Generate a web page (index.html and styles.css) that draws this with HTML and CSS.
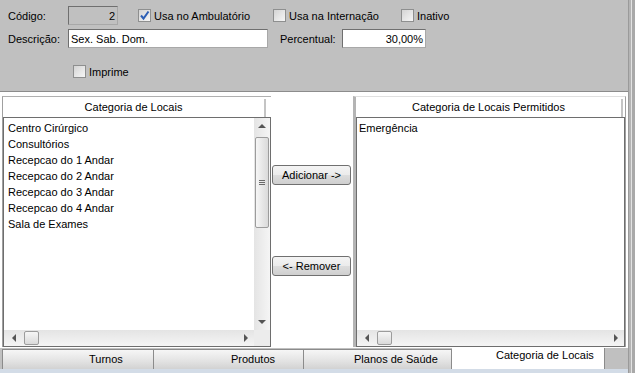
FILE: index.html
```html
<!DOCTYPE html>
<html lang="pt">
<head>
    <meta charset="UTF-8">
    <meta name="viewport" content="width=device-width, initial-scale=1.0">
    <title>Categoria de Locais</title>
    <link rel="stylesheet" href="styles.css">
</head>
<body>

<div class="window">
    <div class="content">

        <!-- dados do registro -->
        <div class="form">
            <div class="row row-code">
                <span class="lbl">Código:</span>
                <div class="field field-code">2</div>
                <div class="check check-amb">
                    <span class="box">
                        <svg width="11" height="11" viewBox="0 0 11 11"><path d="M2 5.5 L4.5 8.5 L9.5 1.5" fill="none" stroke="#2d5fb5" stroke-width="2"/></svg>
                    </span>
                    Usa no Ambulatório
                </div>
                <div class="check check-int"><span class="box"></span>Usa na Internação</div>
                <div class="check"><span class="box"></span>Inativo</div>
            </div>
            <div class="row row-desc">
                <span class="lbl">Descrição:</span>
                <div class="field field-desc">Sex. Sab. Dom.</div>
                <span class="lbl lbl-perc">Percentual:</span>
                <div class="field field-perc">30,00%</div>
            </div>
            <div class="row row-print">
                <div class="check"><span class="box"></span>Imprime</div>
            </div>
        </div>

        <!-- listas de categorias -->
        <div class="lists">
            <div class="panel panel-left">
                <div class="list-head">
                    <span class="head-title">Categoria de Locais</span>
                    <span class="head-sep"></span>
                    <span class="head-tail"></span>
                </div>
                <div class="listbox">
                    <div class="list-body">
                        <ul class="items">
                            <li>Centro Cirúrgico</li>
                            <li>Consultórios</li>
                            <li>Recepcao do 1 Andar</li>
                            <li>Recepcao do 2 Andar</li>
                            <li>Recepcao do 3 Andar</li>
                            <li>Recepcao do 4 Andar</li>
                            <li>Sala de Exames</li>
                        </ul>
                        <div class="vscroll">
                            <span class="arrow arrow-up"></span>
                            <span class="vthumb"><span class="grip"></span></span>
                            <span class="fill"></span>
                            <span class="arrow arrow-down"></span>
                        </div>
                    </div>
                    <div class="hrow">
                        <div class="hscroll">
                            <span class="arrow arrow-left"></span>
                            <span class="hthumb"></span>
                            <span class="fill"></span>
                            <span class="arrow arrow-right"></span>
                        </div>
                        <span class="corner"></span>
                    </div>
                </div>
            </div>

            <div class="actions">
                <button class="btn btn-add">Adicionar -&gt;</button>
                <button class="btn btn-remove">&lt;- Remover</button>
            </div>

            <div class="panel panel-right">
                <div class="list-head">
                    <span class="head-title">Categoria de Locais Permitidos</span>
                    <span class="head-sep"></span>
                    <span class="head-tail"></span>
                </div>
                <div class="listbox">
                    <div class="list-body">
                        <ul class="items">
                            <li>Emergência</li>
                        </ul>
                    </div>
                    <div class="hrow">
                        <div class="hscroll">
                            <span class="arrow arrow-left"></span>
                            <span class="hthumb"></span>
                            <span class="fill"></span>
                            <span class="arrow arrow-right"></span>
                        </div>
                    </div>
                </div>
            </div>
        </div>

        <!-- abas -->
        <div class="tabs">
            <div class="tab tab-turnos">Turnos</div>
            <div class="tab tab-produtos">Produtos</div>
            <div class="tab tab-planos">Planos de Saúde</div>
            <div class="tab tab-locais active">Categoria de Locais</div>
        </div>
        <div class="statusline"></div>
    </div>
    <div class="frame-right"></div>
</div>

</body>
</html>
```

FILE: styles.css
```css
body {
    margin: 0;
    font-family: "Liberation Sans", Arial, sans-serif;
    font-size: 11px;
    color: #000;
    background: #c0c0c0;
}
.window {
    display: flex;
    width: 635px;
    height: 373px;
    overflow: hidden;
}
.content {
    width: 628px;
    display: flex;
    flex-direction: column;
}
.frame-right {
    width: 7px;
    box-sizing: border-box;
    background: #e2e2e2;
    border-left: 1px solid #9a9a9a;
    border-right: 3px solid #a9a9a9;
    box-shadow: inset 2px 0 0 #b4b4b4;
}

/* formulario */
.form {
    height: 91px;
    border-bottom: 1px solid #8c8c8c;
    background: #c0c0c0;
    display: flex;
    flex-direction: column;
}
.row {
    display: flex;
    align-items: center;
    height: 19px;
    padding-left: 8px;
}
.row-code {
    margin-top: 6px;
}
.row-desc {
    margin-top: 4px;
}
.row-print {
    margin-top: 17px;
    height: 13px;
    padding-left: 73px;
}
.lbl {
    width: 60px;
}
.lbl-perc {
    width: 62px;
    margin-left: 12px;
}
.field {
    height: 19px;
    box-sizing: border-box;
    border: 1px solid #6f6f6f;
    border-right-color: #a8a8a8;
    border-bottom-color: #a8a8a8;
    background: #fff;
    padding: 0 2px;
    display: flex;
    align-items: center;
}
.field-code {
    width: 50px;
    background: #c0c0c0;
    justify-content: flex-end;
    margin-right: 20px;
}
.field-desc {
    width: 200px;
}
.field-perc {
    width: 84px;
    justify-content: flex-end;
}
.check {
    display: flex;
    align-items: center;
    gap: 3px;
}
.check-amb {
    width: 135px;
}
.check-int {
    width: 128px;
}
.box {
    width: 13px;
    height: 13px;
    box-sizing: border-box;
    border: 1px solid #8e8f8f;
    background: linear-gradient(135deg, #d4d4d4, #f6f6f6);
    display: flex;
    align-items: center;
    justify-content: center;
}

/* listas */
.lists {
    height: 256px;
    box-sizing: border-box;
    padding-top: 4px;
    padding-bottom: 1px;
    background: #fff;
    display: flex;
}
.panel {
    display: flex;
    flex-direction: column;
    box-sizing: border-box;
    border-top: 1px solid #b0b0b0;
    border-left: 1px solid #a0a0a0;
}
.panel-left {
    width: 269px;
    margin-left: 2px;
}
.panel-right {
    width: 273px;
    border-top-color: #e0e0e0;
    border-left: 3px solid #b4b4b4;
    border-right: 1px solid #a0a0a0;
}
.list-head {
    height: 20px;
    display: flex;
}
.head-title {
    flex: 1;
    text-align: center;
    line-height: 20px;
}
.head-sep {
    width: 2px;
    margin-top: 2px;
    background: #c4c4c4;
}
.head-tail {
    width: 5px;
}
.panel-right .head-tail {
    width: 2px;
}
.listbox {
    flex: 1;
    display: flex;
    flex-direction: column;
    border: 1px solid #6e6e6e;
}
.list-body {
    flex: 1;
    display: flex;
}
.items {
    flex: 1;
    list-style: none;
    margin: 0;
    padding: 2px 0 0 4px;
}
.panel-right .items {
    padding-left: 2px;
}
.items li {
    line-height: 16px;
    white-space: nowrap;
}

/* barras de rolagem */
.vscroll {
    width: 16px;
    display: flex;
    flex-direction: column;
    align-items: center;
    background: linear-gradient(to right, #e4e4e4, #f5f5f5);
}
.hrow {
    height: 16px;
    display: flex;
}
.hscroll {
    flex: 1;
    display: flex;
    align-items: center;
    background: linear-gradient(#e4e4e4, #f5f5f5);
}
.corner {
    width: 16px;
    background: #ececec;
}
.fill {
    flex: 1;
}
.arrow {
    width: 16px;
    height: 16px;
    display: flex;
    align-items: center;
    justify-content: center;
    flex-shrink: 0;
}
.arrow::after {
    content: "";
    border: 4px solid transparent;
}
.arrow-up::after {
    border-top: 0;
    border-bottom: 4px solid #555;
}
.arrow-down::after {
    border-bottom: 0;
    border-top: 4px solid #555;
}
.arrow-left::after {
    border-left: 0;
    border-right: 4px solid #555;
}
.arrow-right::after {
    border-right: 0;
    border-left: 4px solid #555;
}
.arrow-left {
    width: 20px;
}
.vthumb {
    width: 14px;
    height: 91px;
    margin-top: 3px;
    box-sizing: border-box;
    border: 1px solid #9c9c9c;
    border-radius: 2px;
    background: linear-gradient(to right, #f6f6f6, #dadada);
    display: flex;
    align-items: center;
    justify-content: center;
}
.grip {
    width: 6px;
    height: 5px;
    background: repeating-linear-gradient(#6a6a6a 0 1px, transparent 1px 2px);
}
.hthumb {
    width: 15px;
    height: 14px;
    box-sizing: border-box;
    border: 1px solid #9c9c9c;
    border-radius: 2px;
    background: linear-gradient(#f6f6f6, #dadada);
}

/* botoes */
.actions {
    width: 82px;
    display: flex;
    flex-direction: column;
    align-items: flex-start;
    padding-top: 69px;
}
.btn {
    width: 79px;
    height: 20px;
    margin-left: 1px;
    padding: 0;
    font-family: inherit;
    font-size: 11px;
    color: #000;
    border: 1px solid #707070;
    border-radius: 3px;
    background: linear-gradient(#f4f4f4 0%, #ebebeb 50%, #dddddd 51%, #cfcfcf 100%);
}
.btn-remove {
    margin-top: 71px;
}

/* abas */
.tabs {
    height: 21px;
    display: flex;
    padding-left: 2px;
    background: #c0c0c0;
}
.tab {
    height: 20px;
    margin-top: 1px;
    box-sizing: border-box;
    border-top: 1px solid #8b8b8b;
    border-right: 1px solid #8b8b8b;
    background: linear-gradient(#f6f6f6, #e2e2e2 60%, #d2d2d2);
    line-height: 19px;
    white-space: nowrap;
}
.tab-turnos {
    width: 152px;
    border-left: 1px solid #8b8b8b;
    padding-left: 86px;
}
.tab-produtos {
    width: 150px;
    padding-left: 77px;
}
.tab-planos {
    width: 148px;
    padding-left: 50px;
}
.tab-locais {
    width: 153px;
    padding-left: 44px;
}
.tab.active {
    height: 21px;
    margin-top: 0;
    border-top: 0;
    background: #fff;
    line-height: 14px;
}
.statusline {
    height: 4px;
    background: #d3dce7;
}
```
